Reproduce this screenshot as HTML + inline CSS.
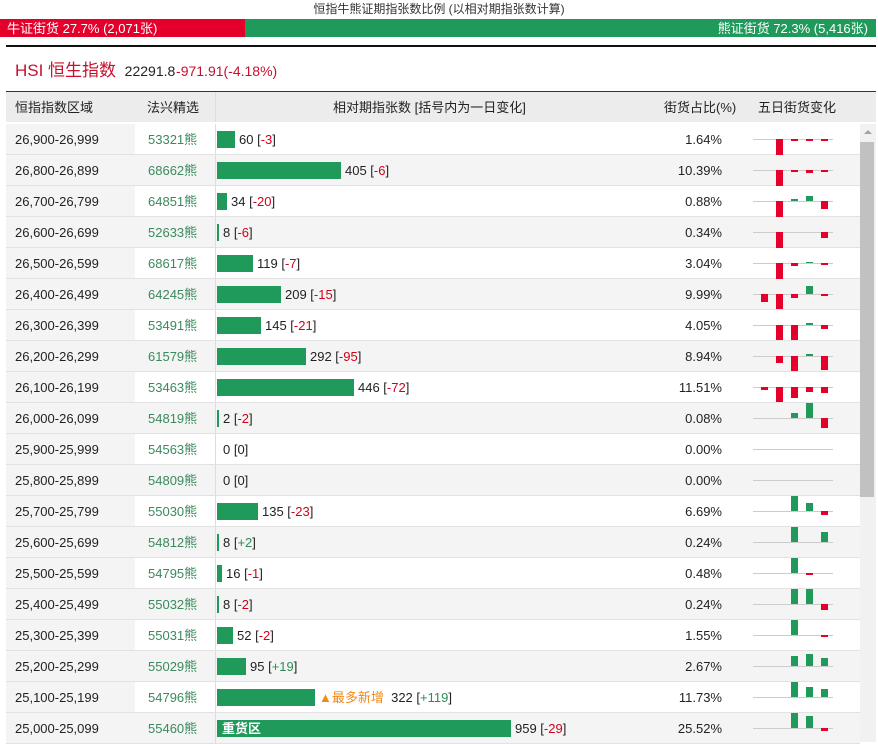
<!DOCTYPE html>
<html><head><meta charset="utf-8"><style>
*{margin:0;padding:0;box-sizing:border-box}
body{width:878px;height:742px;overflow:hidden;background:#fff;font-family:"Liberation Sans","Noto Sans CJK SC",sans-serif;color:#222;position:relative;line-height:15px}
.a{position:absolute}
.title{left:0;width:878px;top:2px;text-align:center;font-size:12px;color:#333}
.red{background:#e4002b}.grn{background:#1f9a5b}
.row{position:absolute;left:6px;width:854px;height:31px;border-bottom:1px solid #e2e2e2;font-size:13px}
.row.g{background:#f4f4f4}
.row .c1{position:absolute;left:0;top:0;width:129px;height:30px;background:#f4f4f4;padding:8px 0 0 9px}
.row .c2{position:absolute;left:129px;top:0;width:80px;height:30px;background:#fff;padding:8px 0 0 13px;color:#3a8a5c}
.row.g .c2{background:#f4f4f4}
.row .c3{position:absolute;left:209px;top:0;height:30px;border-left:1px solid #ddd;width:440px}
.bar{position:absolute;left:1px;top:7px;height:17px;background:#1f9a5b}
.num{position:absolute;top:8px;white-space:nowrap}
.n{color:#d0021b}.p{color:#2e8b57}
.pct{position:absolute;right:138px;top:8px}
.sp{position:absolute;left:744px;top:0;display:block}
</style></head><body>
<div class="a title">恒指牛熊证期指张数比例 (以相对期指张数计算)</div>
<div class="a red" style="left:0;top:19px;width:245px;height:18px;color:#fff;font-size:13px;padding:2px 0 0 7px">牛证街货 27.7% (2,071张)</div>
<div class="a grn" style="left:245px;top:19px;width:631px;height:18px;color:#fff;font-size:13px;text-align:right;padding:2px 8px 0 0">熊证街货 72.3% (5,416张)</div>
<div class="a" style="left:6px;top:45px;width:870px;height:2px;background:#111"></div>
<div class="a" style="left:15px;top:61px;font-size:17px;line-height:20px;color:#c8102e">HSI 恒生指数 <span style="font-size:14px;color:#222">&nbsp;22291.8</span> <span style="font-size:14px;color:#c8102e;margin-left:-4px">-971.91(-4.18%)</span></div>
<div class="a" style="left:6px;top:91px;width:870px;height:1px;background:#333"></div>
<div class="a" style="left:6px;top:92px;width:870px;height:30px;background:#ececec;font-size:13px;color:#222">
<span class="a" style="left:9px;top:8px">恒指指数区域</span>
<span class="a" style="left:141px;top:8px">法兴精选</span>
<div class="a" style="left:209px;top:0;width:1px;height:30px;background:#ddd"></div>
<span class="a" style="left:327px;top:8px">相对期指张数 [括号内为一日变化]</span>
<span class="a" style="left:658px;top:8px">街货占比(%)</span>
<span class="a" style="left:752px;top:8px">五日街货变化</span>
</div>
<div class="a" style="left:860px;top:124px;width:16px;height:618px;background:#f1f1f1"></div>
<div class="a" style="left:860px;top:142px;width:14px;height:355px;background:#c1c1c1"></div>
<div class="a" style="left:864px;top:130px;width:0;height:0;border-left:4px solid transparent;border-right:4px solid transparent;border-bottom:4px solid #a3a3a3"></div>

<div class="row" style="top:124px"><div class="c1">26,900-26,999</div><div class="c2">53321熊</div><div class="c3"><div class="bar" style="width:18px"></div><div class="num" style="left:23px">60 [<span class="n">-3</span>]</div></div><div class="pct">1.64%</div>
<svg class="sp" width="100" height="31"><line x1="3" y1="15.5" x2="83" y2="15.5" stroke="#ccc"/><rect x="26" y="15" width="7" height="16" fill="#e4002b"/><rect x="41" y="15" width="7" height="2" fill="#e4002b"/><rect x="56" y="15" width="7" height="2" fill="#e4002b"/><rect x="71" y="15" width="7" height="2" fill="#e4002b"/></svg></div>

<div class="row g" style="top:155px"><div class="c1">26,800-26,899</div><div class="c2">68662熊</div><div class="c3"><div class="bar" style="width:124px"></div><div class="num" style="left:129px">405 [<span class="n">-6</span>]</div></div><div class="pct">10.39%</div>
<svg class="sp" width="100" height="31"><line x1="3" y1="15.5" x2="83" y2="15.5" stroke="#ccc"/><rect x="26" y="15" width="7" height="16" fill="#e4002b"/><rect x="41" y="15" width="7" height="2" fill="#e4002b"/><rect x="56" y="15" width="7" height="3" fill="#e4002b"/><rect x="71" y="15" width="7" height="2" fill="#e4002b"/></svg></div>

<div class="row" style="top:186px"><div class="c1">26,700-26,799</div><div class="c2">64851熊</div><div class="c3"><div class="bar" style="width:10px"></div><div class="num" style="left:15px">34 [<span class="n">-20</span>]</div></div><div class="pct">0.88%</div>
<svg class="sp" width="100" height="31"><line x1="3" y1="15.5" x2="83" y2="15.5" stroke="#ccc"/><rect x="26" y="15" width="7" height="16" fill="#e4002b"/><rect x="41" y="13" width="7" height="2" fill="#1f9a5b"/><rect x="56" y="10" width="7" height="5" fill="#1f9a5b"/><rect x="71" y="15" width="7" height="8" fill="#e4002b"/></svg></div>

<div class="row g" style="top:217px"><div class="c1">26,600-26,699</div><div class="c2">52633熊</div><div class="c3"><div class="bar" style="width:2px"></div><div class="num" style="left:7px">8 [<span class="n">-6</span>]</div></div><div class="pct">0.34%</div>
<svg class="sp" width="100" height="31"><line x1="3" y1="15.5" x2="83" y2="15.5" stroke="#ccc"/><rect x="26" y="15" width="7" height="16" fill="#e4002b"/><rect x="71" y="15" width="7" height="6" fill="#e4002b"/></svg></div>

<div class="row" style="top:248px"><div class="c1">26,500-26,599</div><div class="c2">68617熊</div><div class="c3"><div class="bar" style="width:36px"></div><div class="num" style="left:41px">119 [<span class="n">-7</span>]</div></div><div class="pct">3.04%</div>
<svg class="sp" width="100" height="31"><line x1="3" y1="15.5" x2="83" y2="15.5" stroke="#ccc"/><rect x="26" y="15" width="7" height="16" fill="#e4002b"/><rect x="41" y="15" width="7" height="3" fill="#e4002b"/><rect x="56" y="14" width="7" height="1" fill="#1f9a5b"/><rect x="71" y="15" width="7" height="2" fill="#e4002b"/></svg></div>

<div class="row g" style="top:279px"><div class="c1">26,400-26,499</div><div class="c2">64245熊</div><div class="c3"><div class="bar" style="width:64px"></div><div class="num" style="left:69px">209 [<span class="n">-15</span>]</div></div><div class="pct">9.99%</div>
<svg class="sp" width="100" height="31"><line x1="3" y1="15.5" x2="83" y2="15.5" stroke="#ccc"/><rect x="11" y="15" width="7" height="8" fill="#e4002b"/><rect x="26" y="15" width="7" height="15" fill="#e4002b"/><rect x="41" y="15" width="7" height="4" fill="#e4002b"/><rect x="56" y="7" width="7" height="8" fill="#1f9a5b"/><rect x="71" y="15" width="7" height="2" fill="#e4002b"/></svg></div>

<div class="row" style="top:310px"><div class="c1">26,300-26,399</div><div class="c2">53491熊</div><div class="c3"><div class="bar" style="width:44px"></div><div class="num" style="left:49px">145 [<span class="n">-21</span>]</div></div><div class="pct">4.05%</div>
<svg class="sp" width="100" height="31"><line x1="3" y1="15.5" x2="83" y2="15.5" stroke="#ccc"/><rect x="26" y="15" width="7" height="15" fill="#e4002b"/><rect x="41" y="15" width="7" height="15" fill="#e4002b"/><rect x="56" y="13" width="7" height="2" fill="#1f9a5b"/><rect x="71" y="15" width="7" height="4" fill="#e4002b"/></svg></div>

<div class="row g" style="top:341px"><div class="c1">26,200-26,299</div><div class="c2">61579熊</div><div class="c3"><div class="bar" style="width:89px"></div><div class="num" style="left:94px">292 [<span class="n">-95</span>]</div></div><div class="pct">8.94%</div>
<svg class="sp" width="100" height="31"><line x1="3" y1="15.5" x2="83" y2="15.5" stroke="#ccc"/><rect x="26" y="15" width="7" height="7" fill="#e4002b"/><rect x="41" y="15" width="7" height="15" fill="#e4002b"/><rect x="56" y="13" width="7" height="2" fill="#1f9a5b"/><rect x="71" y="15" width="7" height="14" fill="#e4002b"/></svg></div>

<div class="row" style="top:372px"><div class="c1">26,100-26,199</div><div class="c2">53463熊</div><div class="c3"><div class="bar" style="width:137px"></div><div class="num" style="left:142px">446 [<span class="n">-72</span>]</div></div><div class="pct">11.51%</div>
<svg class="sp" width="100" height="31"><line x1="3" y1="15.5" x2="83" y2="15.5" stroke="#ccc"/><rect x="11" y="15" width="7" height="3" fill="#e4002b"/><rect x="26" y="15" width="7" height="15" fill="#e4002b"/><rect x="41" y="15" width="7" height="11" fill="#e4002b"/><rect x="56" y="15" width="7" height="5" fill="#e4002b"/><rect x="71" y="15" width="7" height="6" fill="#e4002b"/></svg></div>

<div class="row g" style="top:403px"><div class="c1">26,000-26,099</div><div class="c2">54819熊</div><div class="c3"><div class="bar" style="width:2px"></div><div class="num" style="left:7px">2 [<span class="n">-2</span>]</div></div><div class="pct">0.08%</div>
<svg class="sp" width="100" height="31"><line x1="3" y1="15.5" x2="83" y2="15.5" stroke="#ccc"/><rect x="41" y="10" width="7" height="5" fill="#1f9a5b"/><rect x="56" y="0" width="7" height="15" fill="#1f9a5b"/><rect x="71" y="15" width="7" height="10" fill="#e4002b"/></svg></div>

<div class="row" style="top:434px"><div class="c1">25,900-25,999</div><div class="c2">54563熊</div><div class="c3"><div class="num" style="left:7px">0 [0]</div></div><div class="pct">0.00%</div>
<svg class="sp" width="100" height="31"><line x1="3" y1="15.5" x2="83" y2="15.5" stroke="#ccc"/></svg></div>

<div class="row g" style="top:465px"><div class="c1">25,800-25,899</div><div class="c2">54809熊</div><div class="c3"><div class="num" style="left:7px">0 [0]</div></div><div class="pct">0.00%</div>
<svg class="sp" width="100" height="31"><line x1="3" y1="15.5" x2="83" y2="15.5" stroke="#ccc"/></svg></div>

<div class="row" style="top:496px"><div class="c1">25,700-25,799</div><div class="c2">55030熊</div><div class="c3"><div class="bar" style="width:41px"></div><div class="num" style="left:46px">135 [<span class="n">-23</span>]</div></div><div class="pct">6.69%</div>
<svg class="sp" width="100" height="31"><line x1="3" y1="15.5" x2="83" y2="15.5" stroke="#ccc"/><rect x="41" y="0" width="7" height="15" fill="#1f9a5b"/><rect x="56" y="7" width="7" height="8" fill="#1f9a5b"/><rect x="71" y="15" width="7" height="4" fill="#e4002b"/></svg></div>

<div class="row g" style="top:527px"><div class="c1">25,600-25,699</div><div class="c2">54812熊</div><div class="c3"><div class="bar" style="width:2px"></div><div class="num" style="left:7px">8 [<span class="p">+2</span>]</div></div><div class="pct">0.24%</div>
<svg class="sp" width="100" height="31"><line x1="3" y1="15.5" x2="83" y2="15.5" stroke="#ccc"/><rect x="41" y="0" width="7" height="15" fill="#1f9a5b"/><rect x="71" y="5" width="7" height="10" fill="#1f9a5b"/></svg></div>

<div class="row" style="top:558px"><div class="c1">25,500-25,599</div><div class="c2">54795熊</div><div class="c3"><div class="bar" style="width:5px"></div><div class="num" style="left:10px">16 [<span class="n">-1</span>]</div></div><div class="pct">0.48%</div>
<svg class="sp" width="100" height="31"><line x1="3" y1="15.5" x2="83" y2="15.5" stroke="#ccc"/><rect x="41" y="0" width="7" height="15" fill="#1f9a5b"/><rect x="56" y="15" width="7" height="2" fill="#e4002b"/></svg></div>

<div class="row g" style="top:589px"><div class="c1">25,400-25,499</div><div class="c2">55032熊</div><div class="c3"><div class="bar" style="width:2px"></div><div class="num" style="left:7px">8 [<span class="n">-2</span>]</div></div><div class="pct">0.24%</div>
<svg class="sp" width="100" height="31"><line x1="3" y1="15.5" x2="83" y2="15.5" stroke="#ccc"/><rect x="41" y="0" width="7" height="15" fill="#1f9a5b"/><rect x="56" y="0" width="7" height="15" fill="#1f9a5b"/><rect x="71" y="15" width="7" height="6" fill="#e4002b"/></svg></div>

<div class="row" style="top:620px"><div class="c1">25,300-25,399</div><div class="c2">55031熊</div><div class="c3"><div class="bar" style="width:16px"></div><div class="num" style="left:21px">52 [<span class="n">-2</span>]</div></div><div class="pct">1.55%</div>
<svg class="sp" width="100" height="31"><line x1="3" y1="15.5" x2="83" y2="15.5" stroke="#ccc"/><rect x="41" y="0" width="7" height="15" fill="#1f9a5b"/><rect x="71" y="15" width="7" height="2" fill="#e4002b"/></svg></div>

<div class="row g" style="top:651px"><div class="c1">25,200-25,299</div><div class="c2">55029熊</div><div class="c3"><div class="bar" style="width:29px"></div><div class="num" style="left:34px">95 [<span class="p">+19</span>]</div></div><div class="pct">2.67%</div>
<svg class="sp" width="100" height="31"><line x1="3" y1="15.5" x2="83" y2="15.5" stroke="#ccc"/><rect x="41" y="5" width="7" height="10" fill="#1f9a5b"/><rect x="56" y="3" width="7" height="12" fill="#1f9a5b"/><rect x="71" y="7" width="7" height="8" fill="#1f9a5b"/></svg></div>

<div class="row" style="top:682px"><div class="c1">25,100-25,199</div><div class="c2">54796熊</div><div class="c3"><div class="bar" style="width:98px"></div><div class="num" style="left:103px"><span style="color:#f08a1c">▲最多新增</span>&nbsp; 322 [<span class="p">+119</span>]</div></div><div class="pct">11.73%</div>
<svg class="sp" width="100" height="31"><line x1="3" y1="15.5" x2="83" y2="15.5" stroke="#ccc"/><rect x="41" y="0" width="7" height="15" fill="#1f9a5b"/><rect x="56" y="5" width="7" height="10" fill="#1f9a5b"/><rect x="71" y="7" width="7" height="8" fill="#1f9a5b"/></svg></div>

<div class="row g" style="top:713px"><div class="c1">25,000-25,099</div><div class="c2">55460熊</div><div class="c3"><div class="bar" style="width:294px;color:#fff;font-weight:bold;font-size:13px;padding:1px 0 0 5px">重货区</div><div class="num" style="left:299px">959 [<span class="n">-29</span>]</div></div><div class="pct">25.52%</div>
<svg class="sp" width="100" height="31"><line x1="3" y1="15.5" x2="83" y2="15.5" stroke="#ccc"/><rect x="41" y="0" width="7" height="15" fill="#1f9a5b"/><rect x="56" y="3" width="7" height="12" fill="#1f9a5b"/><rect x="71" y="15" width="7" height="3" fill="#e4002b"/></svg></div>
</body></html>
